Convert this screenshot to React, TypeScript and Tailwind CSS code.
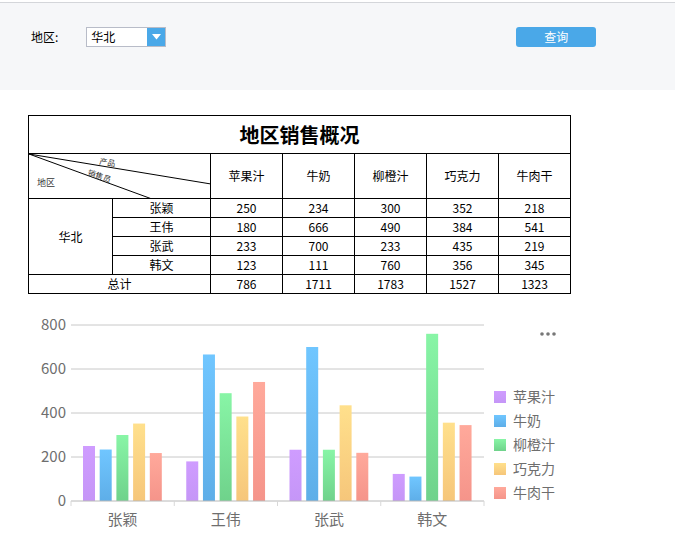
import React from "react";

const products = ["苹果汁", "牛奶", "柳橙汁", "巧克力", "牛肉干"];

const rows = [
  { name: "张颖", values: [250, 234, 300, 352, 218] },
  { name: "王伟", values: [180, 666, 490, 384, 541] },
  { name: "张武", values: [233, 700, 233, 435, 219] },
  { name: "韩文", values: [123, 111, 760, 356, 345] },
];

const totals = [786, 1711, 1783, 1527, 1323];

// top / bottom colours of each series' bar gradient
const series = [
  { id: "g0", top: "#cf9cff", bottom: "#c596f7" },
  { id: "g1", top: "#70c6ff", bottom: "#5eaee8" },
  { id: "g2", top: "#88f5a6", bottom: "#6fd28b" },
  { id: "g3", top: "#ffe08c", bottom: "#f6c67a" },
  { id: "g4", top: "#ffa99b", bottom: "#f5948a" },
];

const FONT = "'Noto Sans CJK SC', 'Noto Sans', sans-serif";

function Filter() {
  return (
    <div className="flex h-[88px] items-start border-t border-[#d4d6da] bg-[#f6f7f9] pt-[24px]">
      <div className="flex h-[20px] items-center">
        <span className="ml-[31px] text-[12px] text-black">地区:</span>
        <div className="ml-[28px] flex h-[20px] w-[80px] items-stretch border border-[#b8bcc8] bg-white">
          <span className="flex flex-1 items-center pl-[4px] text-[12px] text-black">华北</span>
          <span className="flex w-[18px] items-center justify-center bg-[#4aa8e8]">
            <svg width="9" height="6" viewBox="0 0 9 6">
              <path d="M0 0 H9 L4.5 5.5 Z" fill="#fff" />
            </svg>
          </span>
        </div>
      </div>
      <button
        type="button"
        className="ml-[350px] h-[20px] w-[80px] rounded-[3px] bg-[#4aa8e8] text-[12px] text-white"
      >
        查询
      </button>
    </div>
  );
}

function DiagonalHeader() {
  return (
    <svg className="absolute inset-0" width="182" height="45" viewBox="0 0 182 45">
      <line x1="0" y1="0" x2="182" y2="30" stroke="#000" strokeWidth="1" />
      <line x1="0" y1="0" x2="123" y2="45" stroke="#000" strokeWidth="1" />
      <text x="70" y="10" fontSize="8" fill="#333" fontFamily={FONT} transform="rotate(9 70 10)">
        产品
      </text>
      <text x="58" y="21" fontSize="8" fill="#333" fontFamily={FONT} transform="rotate(19 58 21)">
        销售员
      </text>
      <text x="8" y="32" fontSize="9" fill="#333" fontFamily={FONT}>
        地区
      </text>
    </svg>
  );
}

function SalesTable() {
  return (
    <table className="ml-[28px] mt-[25px] w-[542px] table-fixed border-collapse text-[12px] text-black">
      <colgroup>
        <col className="w-[84px]" />
        <col className="w-[98px]" />
        {products.map((p) => (
          <col key={p} className="w-[72px]" />
        ))}
      </colgroup>
      <tbody>
        <tr className="h-[38px]">
          <td colSpan={7} className="border border-black text-center text-[20px] font-bold">
            地区销售概况
          </td>
        </tr>
        <tr className="h-[45px]">
          <td colSpan={2} className="relative border border-black p-0">
            <DiagonalHeader />
          </td>
          {products.map((p) => (
            <td key={p} className="border border-black text-center">
              {p}
            </td>
          ))}
        </tr>
        {rows.map((r, i) => (
          <tr key={r.name} className="h-[19px]">
            {i === 0 && (
              <td rowSpan={4} className="border border-black text-center">
                华北
              </td>
            )}
            <td className="border border-black p-0 text-center">{r.name}</td>
            {r.values.map((v, j) => (
              <td key={j} className="border border-black p-0 text-center">
                {v}
              </td>
            ))}
          </tr>
        ))}
        <tr className="h-[19px]">
          <td colSpan={2} className="border border-black p-0 text-center">
            总计
          </td>
          {totals.map((v, j) => (
            <td key={j} className="border border-black p-0 text-center">
              {v}
            </td>
          ))}
        </tr>
      </tbody>
    </table>
  );
}

function BarChart() {
  const left = 71;
  const right = 484;
  const base = 500;
  const catW = (right - left) / 4;
  const scale = 44 / 200;
  const ticks = [0, 200, 400, 600, 800];

  return (
    <svg className="mt-[7px] block" width="675" height="245" viewBox="0 300 675 245">
      <defs>
        {series.map((s) => (
          <linearGradient key={s.id} id={s.id} x1="0" y1="0" x2="0" y2="1">
            <stop offset="0" stopColor={s.top} />
            <stop offset="1" stopColor={s.bottom} />
          </linearGradient>
        ))}
      </defs>

      {ticks.map((t) => {
        const y = base - t * scale;
        return (
          <g key={t}>
            {t > 0 && <line x1={left} x2={right} y1={y} y2={y} stroke="#c8c8c8" strokeWidth="1" />}
            <text x="66" y={y + 5} textAnchor="end" fontSize="15" fill="#6e6e6e" fontFamily={FONT}>
              {t}
            </text>
          </g>
        );
      })}

      {rows.map((r, i) =>
        r.values.map((v, j) => {
          const h = v * scale;
          const x = left + i * catW + 12 + j * 16.7;
          return <rect key={`${i}-${j}`} x={x} y={base - h} width="12" height={h} fill={`url(#${series[j].id})`} />;
        })
      )}

      <line x1={left} x2={right} y1={base} y2={base} stroke="#b8b8b8" strokeWidth="1" />
      {[0, 1, 2, 3, 4].map((k) => (
        <line
          key={k}
          x1={left + k * catW}
          x2={left + k * catW}
          y1={base}
          y2={base + 5}
          stroke="#d8d8d8"
          strokeWidth="1"
        />
      ))}
      {rows.map((r, i) => (
        <text
          key={r.name}
          x={left + i * catW + catW / 2}
          y="524"
          textAnchor="middle"
          fontSize="15"
          fill="#6e6e6e"
          fontFamily={FONT}
        >
          {r.name}
        </text>
      ))}

      {/* legend */}
      {products.map((p, j) => {
        const cy = 396 + j * 24;
        return (
          <g key={p}>
            <rect x="494" y={cy - 6} width="12" height="12" fill={`url(#${series[j].id})`} />
            <text x="513" y={cy + 5} fontSize="14" fill="#6e6e6e" fontFamily={FONT}>
              {p}
            </text>
          </g>
        );
      })}

      {/* more menu */}
      {[542, 548, 554].map((cx) => (
        <circle key={cx} cx={cx} cy="333" r="1.8" fill="#777" />
      ))}
    </svg>
  );
}

export default function App() {
  return (
    <div
      className="w-[675px] overflow-hidden bg-white"
      style={{ fontFamily: FONT }}
    >
      <div className="h-[2px] bg-white" />
      <Filter />
      <SalesTable />
      <BarChart />
    </div>
  );
}
